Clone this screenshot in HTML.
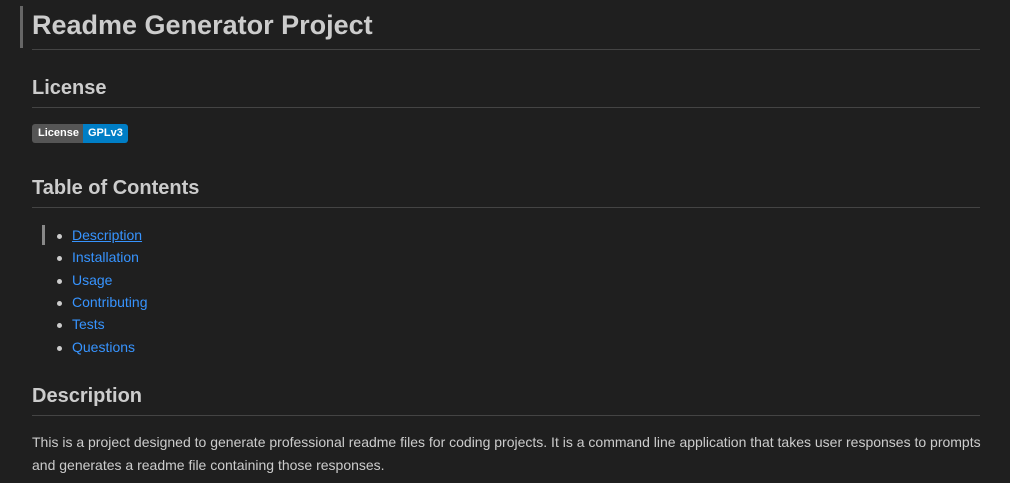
<!DOCTYPE html><html><head><style>
body{margin:0;background:#1f1f1f;color:#cccccc;font-family:"Liberation Sans",sans-serif;width:1010px;height:483px;overflow:hidden;position:relative}
.a{position:absolute;left:32px}
h1,h2{margin:0;font-weight:bold;color:#cccccc}
.hr{position:absolute;left:32px;width:948px;height:1px;background:#444}
a{color:#3794ff}
li{position:absolute;left:72px;font-size:14px;color:#3794ff}
li:before{content:"";position:absolute;left:-15px;top:7px;width:5px;height:5px;border-radius:50%;background:#ccc}
p{margin:0;font-size:14px;line-height:23px}
</style></head><body>
<div style="position:absolute;left:20px;top:6px;width:3px;height:42px;background:#666"></div>
<h1 class="a" style="top:10px;font-size:27px">Readme Generator Project</h1>
<div class="hr" style="top:49px"></div>
<h2 class="a" style="top:77px;font-size:20px">License</h2>
<div class="hr" style="top:107px"></div>
<div class="a" style="top:124px;height:19px;display:flex;font-size:11px;font-weight:bold;color:#fff;border-radius:3px;overflow:hidden;line-height:19px">
<span style="background:#555;padding:0 4px 0 6px">License</span><span style="background:#007ec6;padding:0 5px 0 5px">GPLv3</span></div>
<h2 class="a" style="top:177px;font-size:20px">Table of Contents</h2>
<div class="hr" style="top:207px"></div>
<div style="position:absolute;left:42px;top:225px;width:3px;height:20px;background:#888"></div>
<ul style="margin:0;padding:0;list-style:none">
<li style="top:227px"><a style="text-decoration:underline">Description</a></li>
<li style="top:249px">Installation</li>
<li style="top:272px">Usage</li>
<li style="top:294px">Contributing</li>
<li style="top:316px">Tests</li>
<li style="top:339px">Questions</li>
</ul>
<h2 class="a" style="top:385px;font-size:20px">Description</h2>
<div class="hr" style="top:415px"></div>
<p class="a" style="top:431px;width:960px">This is a project designed to generate professional readme files for coding projects. It is a command line application that takes user responses to prompts and generates a readme file containing those responses.</p>
</body></html>
